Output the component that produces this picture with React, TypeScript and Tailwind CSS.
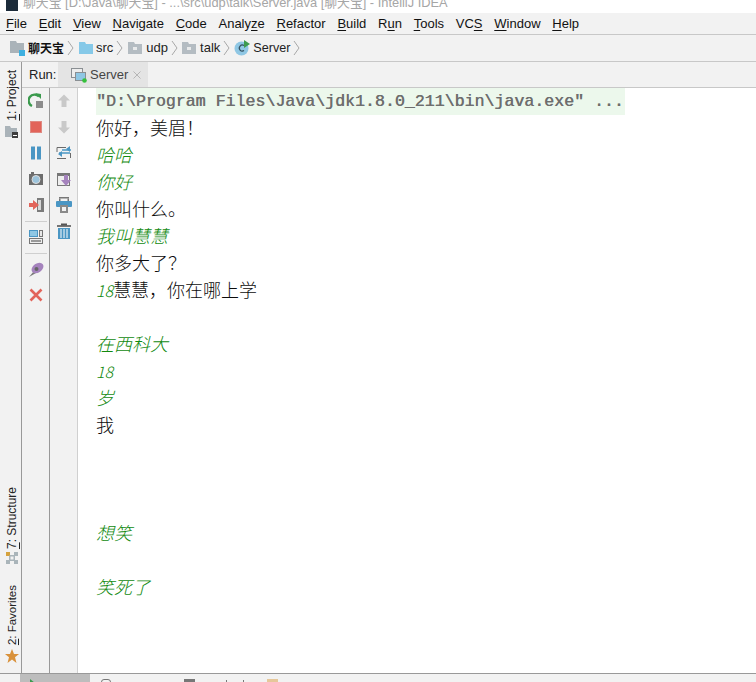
import React from "react";

const Ic = ({ children, w = 16, h = 16 }: { children: React.ReactNode; w?: number; h?: number }) => (
  <svg width={w} height={h} viewBox={`0 0 ${w} ${h}`} className="block shrink-0">{children}</svg>
);

const menu: [string, string, string][] = [
  ["", "F", "ile"], ["", "E", "dit"], ["", "V", "iew"], ["", "N", "avigate"], ["", "C", "ode"],
  ["Analy", "z", "e"], ["", "R", "efactor"], ["", "B", "uild"], ["R", "u", "n"], ["", "T", "ools"],
  ["VC", "S", ""], ["", "W", "indow"], ["", "H", "elp"],
];

const Chevron = () => (
  <svg width="7" height="16" viewBox="0 0 7 16" className="block shrink-0">
    <path d="M1 1 L6 8 L1 15" fill="none" stroke="#a8a8a8" strokeWidth="1" />
  </svg>
);

const Folder = ({ fill = "#b4bcc2", dot = true }: { fill?: string; dot?: boolean }) => (
  <svg width="14" height="12" viewBox="0 0 14 12" className="block shrink-0">
    <path d="M0 0H6L7 2H14V12H0Z" fill={fill} />
    {dot && <rect x="5" y="5" width="4" height="3" fill="#e8eaeb" />}
  </svg>
);

const Row = ({ children, g }: { children?: React.ReactNode; g?: boolean }) => (
  <div className={g ? "h-[27px] leading-[25px] italic text-[#128a10]" : "h-[27px] leading-[25px] text-[#0c0c0c]"}>{children}</div>
);

const Sep = () => <div className="w-[22px] h-px bg-[#cfcfcf] mt-[-2px] mb-[-3px]" />;

export default function App() {
  return (
    <div className="w-[756px] h-[682px] overflow-hidden flex flex-col bg-white font-['Liberation_Sans','Noto_Sans_CJK_SC',sans-serif]">
      <div className="h-[13px] shrink-0 bg-white flex items-start overflow-hidden">
        <div className="w-[12px] h-[11px] bg-[#1c2b3a] ml-[6px] shrink-0" />
        <div className="ml-[5px] mt-[-5px] text-[12.85px] leading-[16px] text-[#a6a6a6] whitespace-nowrap">聊天宝 [D:\Java\聊天宝] - ...\src\udp\talk\Server.java [聊天宝] - IntelliJ IDEA</div>
      </div>

      <div className="h-[21px] shrink-0 bg-[#f2f2f2] flex items-center pl-[6px] gap-[11.75px] text-[13px] text-[#111]">
        {menu.map(([a, u, b]) => (
          <span key={a + u + b} className="whitespace-nowrap">{a}<span className="underline underline-offset-2">{u}</span>{b}</span>
        ))}
      </div>
      <div className="h-px shrink-0 bg-[#c8c8c8]" />

      <div className="h-[26px] shrink-0 bg-[#f2f2f2] flex items-center pl-[10px] text-[13px] text-[#222]">
        <svg width="16" height="16" viewBox="0 0 16 16" className="block shrink-0 mr-[2px]">
          <path d="M0 1H6L7 3H14V13H0Z" fill="#aab3b9" />
          <rect x="9" y="10" width="6" height="6" fill="#3fb0e0" />
        </svg>
        <span className="font-bold text-[#111] font-['Noto_Sans_CJK_SC',sans-serif] text-[12px]">聊天宝</span>
        <span className="ml-[3px] mr-[5px]"><Chevron /></span>
        <Folder fill="#86c9e8" dot={false} />
        <span className="ml-[3px]">src</span>
        <span className="ml-[3px] mr-[5px]"><Chevron /></span>
        <Folder />
        <span className="ml-[4px]">udp</span>
        <span className="ml-[3px] mr-[4px]"><Chevron /></span>
        <Folder />
        <span className="ml-[4px]">talk</span>
        <span className="ml-[3px] mr-[4px]"><Chevron /></span>
        <svg width="16" height="16" viewBox="0 0 16 16" className="block shrink-0">
          <circle cx="7.5" cy="8.5" r="7" fill="#8fc7e4" />
          <path d="M10 5.6A3 3 0 1 0 10 10.6" fill="none" stroke="#35505f" strokeWidth="1.2" />
          <path d="M10 0L16 4L10 8Z" fill="#3d9c4f" />
        </svg>
        <span className="ml-[3px] text-[12.6px]">Server</span>
        <span className="ml-[3px]"><Chevron /></span>
      </div>
      <div className="h-px shrink-0 bg-[#c8c8c8]" />

      <div className="flex-1 min-h-0 flex">
        <div className="w-[21px] shrink-0 bg-[#f2f2f2] flex flex-col items-center pt-[8px] pb-[10px] pl-[2px] text-[12px] text-[#222]">
          <span className="[writing-mode:vertical-rl] rotate-180 leading-[14px] whitespace-nowrap"><span className="underline">1</span>: Project</span>
          <svg width="13" height="13" viewBox="0 0 13 13" className="block shrink-0 mt-[4px]">
            <path d="M0 1H5L6 3H12V12H0Z" fill="#aab3b9" />
            <rect x="7" y="7" width="6" height="6" fill="#3d3d3d" />
            <rect x="8" y="10" width="4" height="1" fill="#fff" />
          </svg>
          <div className="flex-1" />
          <span className="[writing-mode:vertical-rl] rotate-180 leading-[14px] whitespace-nowrap"><span className="underline">7</span>: Structure</span>
          <svg width="12" height="12" viewBox="0 0 12 12" className="block shrink-0 mt-[3px]">
            <rect x="0" y="0" width="4" height="4" fill="#d6a33e" />
            <path d="M8 0H12V4H8ZM0 8H4V12H0ZM8 8H12V12H8ZM4 3L8 3L9 4L9 8L8 9L4 9L3 8L3 4Z" fill="#aab5ba" />
            <rect x="4.5" y="4.5" width="3" height="3" fill="#f2f2f2" />
          </svg>
          <span className="[writing-mode:vertical-rl] rotate-180 leading-[14px] whitespace-nowrap mt-[21px] text-[11.5px]"><span className="underline">2</span>: Favorites</span>
          <svg width="14" height="14" viewBox="0 0 14 14" className="block shrink-0 mt-[4px]">
            <path d="M7 0L9 5H14L10 8.2L11.5 14L7 10.6L2.5 14L4 8.2L0 5H5Z" fill="#d9913a" />
          </svg>
        </div>
        <div className="w-px shrink-0 bg-[#999]" />

        <div className="flex-1 min-w-0 flex flex-col">
          <div className="h-[25px] shrink-0 bg-[#f2f2f2] flex items-center text-[13px] text-[#222]">
            <span className="pl-[7px] w-[36px]">Run:</span>
            <div className="h-full w-[90px] bg-[#e4e4e4] flex items-center pl-[13px]">
              <svg width="16" height="16" viewBox="0 0 16 16" className="block shrink-0">
                <rect x="0.5" y="1.5" width="11" height="9" fill="#ededed" stroke="#8a8f93" />
                <rect x="4.5" y="5.5" width="10" height="8" fill="#8fc7e4" stroke="#8a8f93" />
                <circle cx="13.5" cy="13.5" r="2.3" fill="#35c03c" />
              </svg>
              <span className="ml-[3px] text-[#444]">Server</span>
              <svg width="8" height="8" viewBox="0 0 8 8" className="block shrink-0 ml-[5px]">
                <path d="M0.5 0.5L7.5 7.5M7.5 0.5L0.5 7.5" stroke="#b5b5b5" strokeWidth="1" />
              </svg>
            </div>
          </div>
          <div className="h-px shrink-0 bg-[#c8c8c8]" />

          <div className="flex-1 min-h-0 flex">
            <div className="w-[27px] shrink-0 bg-[#f2f2f2] flex flex-col items-center pt-[5px] gap-[10px]">
              <Ic>
                <path d="M11 3.5A6 6 0 1 0 4 13" fill="none" stroke="#3a9a4d" strokeWidth="2.4" />
                <path d="M7 0L13 1V6Z" fill="#3a9a4d" />
                <rect x="8" y="8" width="7" height="7" fill="#8c8c8c" />
              </Ic>
              <Ic><rect x="2.5" y="2.5" width="11" height="11" fill="#e2645a" stroke="#df8a82" /></Ic>
              <Ic>
                <rect x="3" y="1.5" width="4" height="13" fill="#4a96c4" />
                <rect x="9" y="1.5" width="4" height="13" fill="#4a96c4" />
              </Ic>
              <Ic>
                <rect x="1" y="3" width="14" height="11" fill="#6d6d6d" />
                <rect x="3" y="1" width="3" height="2" fill="#6d6d6d" />
                <circle cx="8" cy="8.5" r="4" fill="#9cc4dc" stroke="#dcdcdc" />
              </Ic>
              <Ic>
                <rect x="9" y="1" width="7" height="14" fill="#7b7b7b" />
                <rect x="10" y="3" width="3" height="10" fill="#d8d8d8" />
                <path d="M1 6H5V3L11 8L5 13V10H1Z" fill="#e2645a" />
              </Ic>
              <Sep />
              <Ic>
                <rect x="1.5" y="1.5" width="8" height="6" fill="#8fc7e4" stroke="#4a96c4" />
                <rect x="11.5" y="1.5" width="3" height="6" fill="#e8e8e8" stroke="#777" />
                <rect x="1.5" y="9.5" width="13" height="5" fill="#eee" stroke="#777" />
                <rect x="3" y="11" width="10" height="2" fill="#999" />
              </Ic>
              <Sep />
              <Ic>
                <path d="M1 16L6 10L8 12Z" fill="#7b7b7b" />
                <ellipse cx="9.5" cy="7" rx="6.5" ry="4.5" transform="rotate(-35 9.5 7)" fill="#a583bd" />
                <circle cx="8.5" cy="8" r="2" fill="#666" />
              </Ic>
              <Ic><path d="M2.5 2.5L13.5 13.5M13.5 2.5L2.5 13.5" stroke="#e2645a" strokeWidth="2.6" /></Ic>
            </div>
            <div className="w-px shrink-0 bg-[#999]" />
            <div className="w-[27px] shrink-0 bg-[#f2f2f2] flex flex-col items-center pt-[5px] gap-[10px]">
              <Ic><path d="M8 1.5L14 7.5H10.5V14H5.5V7.5H2Z" fill="#c9c9c9" /></Ic>
              <Ic><path d="M8 14.5L14 8.5H10.5V2H5.5V8.5H2Z" fill="#c9c9c9" /></Ic>
              <Ic>
                <path d="M1 2.5H10M1 13.5H10M1 2.5V7M14.5 8V13" fill="none" stroke="#6a6a6a" />
                <path d="M3 8H14M15 5H6" fill="none" stroke="#4a96c4" strokeWidth="1.4" />
                <path d="M14 1L10 4L14 7ZM2 9L6 6V12Z" fill="#4a96c4" />
              </Ic>
              <Ic>
                <rect x="1.5" y="2.5" width="12" height="12" fill="#eee" stroke="#777" />
                <rect x="1" y="2" width="13" height="3" fill="#777" />
                <path d="M8 4H12V9H15L10 15L5 9H8Z" fill="#a583bd" />
              </Ic>
              <Ic>
                <rect x="3" y="0" width="10" height="1.5" fill="#777" />
                <rect x="3" y="1.5" width="1.5" height="3" fill="#777" />
                <rect x="11.5" y="1.5" width="1.5" height="3" fill="#777" />
                <rect x="0" y="4" width="16" height="6" rx="1" fill="#4a96c4" />
                <rect x="4" y="8" width="8" height="8" fill="#8a8a8a" />
                <rect x="6" y="10" width="4" height="4" fill="#f2f2f2" />
              </Ic>
              <Ic>
                <path d="M1 3H15" stroke="#555" strokeWidth="1.6" />
                <rect x="5" y="0.5" width="6" height="2" fill="#555" />
                <rect x="2" y="5" width="12" height="11" fill="#4a96c4" />
                <path d="M5 6V15M8 6V15M11 6V15" stroke="#fff" />
              </Ic>
            </div>
            <div className="w-px shrink-0 bg-[#d0d0d0]" />
            <div className="flex-1 min-w-0 bg-white pl-[18px] text-[18px] font-['Noto_Sans_CJK_SC',sans-serif] font-light">
              <div className="w-[529px] h-[27px] bg-[#ecf8ec] font-['Liberation_Mono',monospace] font-normal text-[16.6px] leading-[28px] text-[#6e6e6e] whitespace-pre [text-shadow:0.4px_0_0_#6e6e6e]">"D:\Program Files\Java\jdk1.8.0_211\bin\java.exe" ...</div>
              <Row>你好，美眉！</Row>
              <Row g>哈哈</Row>
              <Row g>你好</Row>
              <Row>你叫什么。</Row>
              <Row g>我叫慧慧</Row>
              <Row>你多大了？</Row>
              <Row><span className="italic text-[#128a10] text-[16px]">18</span>慧慧，你在哪上学</Row>
              <Row />
              <Row g>在西科大</Row>
              <Row g><span className="text-[16px]">18</span></Row>
              <Row g>岁</Row>
              <Row>我</Row>
              <Row />
              <Row />
              <Row />
              <Row g>想笑</Row>
              <Row />
              <Row g>笑死了</Row>
            </div>
          </div>
        </div>
      </div>

      <div className="h-px shrink-0 bg-[#999]" />
      <div className="h-[8px] shrink-0 bg-[#f2f2f2] flex overflow-hidden">
        <div className="ml-[20px] w-[70px] h-full bg-[#bdbdbd] pl-[10px] pt-[5px] shrink-0">
          <div className="w-0 h-0 border-l-[5px] border-l-[#3a9a4d] border-y-[4px] border-y-transparent" />
        </div>
        <div className="ml-[11px] mt-[5px] w-[10px] h-[6px] rounded-full border border-[#777] shrink-0" />
        <div className="ml-[73px] mt-[5px] w-[11px] h-[3px] bg-[#777] shrink-0" />
        <div className="ml-[31px] mt-[6px] w-[1px] h-[2px] bg-[#777] shrink-0" />
        <div className="ml-[16px] mt-[6px] w-[1px] h-[2px] bg-[#777] shrink-0" />
        <div className="ml-[23px] mt-[5px] w-[11px] h-[3px] bg-[#e6c79a] shrink-0" />
      </div>
    </div>
  );
}
